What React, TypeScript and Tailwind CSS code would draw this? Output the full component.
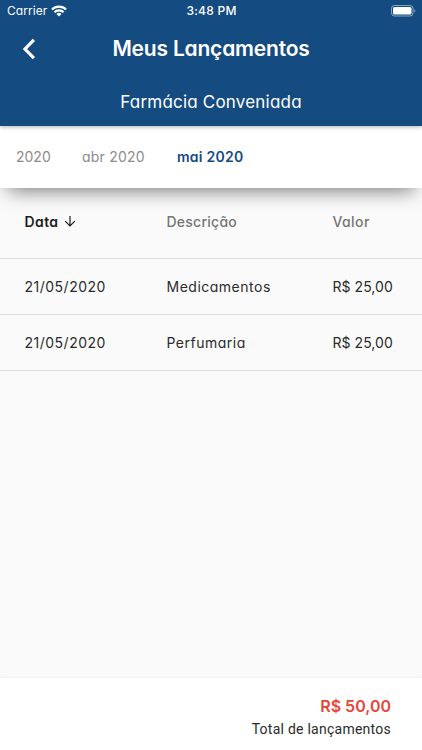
import React, { useState } from 'react';

type Entry = {
  id: number;
  date: string;
  description: string;
  value: string;
};

const months = [
  { id: 'prev', label: '2020', className: 'w-[34px] mr-8' },
  { id: 'abr', label: 'abr 2020', className: 'w-16 mr-[31px] tracking-[0.2px]' },
  { id: 'mai', label: 'mai 2020', className: 'tracking-[0.25px]' },
];

const entries: Entry[] = [
  { id: 1, date: '21/05/2020', description: 'Medicamentos', value: 'R$ 25,00' },
  { id: 2, date: '21/05/2020', description: 'Perfumaria', value: 'R$ 25,00' },
];

const StatusBar = () => (
  <div className="grid h-[22px] grid-cols-3 items-center pl-[7px] pr-[6px] text-[12px] leading-[22px]">
    <div className="flex items-center gap-[4px]">
      <span className="tracking-[0.05px]">Carrier</span>
      <svg className="h-[12px] w-[16px]" viewBox="0 0 16 12" fill="none" stroke="currentColor" strokeWidth="2.1">
        <path d="M.9 4.500a10.200 10.200 0 0 1 14.200 0" />
        <path d="M3.400 7.200a6.600 6.600 0 0 1 9.200 0" />
        <path d="M8 11.500 5.500 9a3.600 3.600 0 0 1 5 0Z" fill="currentColor" stroke="none" />
      </svg>
    </div>
    <span className="text-center font-medium tracking-[0.25px]">3:48 PM</span>
    <svg className="h-[12px] w-[25px] justify-self-end" viewBox="0 0 25 12" fill="none">
      <rect x="0.5" y="0.5" width="21.5" height="10.5" rx="3" stroke="#fff" strokeOpacity="0.5" />
      <rect x="2" y="2" width="18.5" height="7.5" rx="1.6" fill="#fff" />
      <path d="M23.3 4v3.5c1.4-.6 1.4-2.900 0-3.500Z" fill="#fff" fillOpacity="0.5" />
    </svg>
  </div>
);

const Header = () => (
  <header className="relative z-20 h-[126px] bg-[#144b80] text-white shadow-[0_1px_4px_rgba(0,0,0,0.3)]">
    <StatusBar />
    <div className="grid h-[54px] grid-cols-[60px_1fr_60px] items-center">
      <button className="pl-[22px]" aria-label="Voltar">
        <svg className="h-[22px] w-[14px]" viewBox="0 0 14 22" fill="none" stroke="currentColor" strokeWidth="3.2">
          <path d="M11.900 1.900 3 11l8.900 9.100" />
        </svg>
      </button>
      <h1 className="whitespace-nowrap text-center text-[21px] font-semibold leading-7 tracking-[-0.2px]">Meus Lançamentos</h1>
    </div>
    <h2 className="pt-[14px] text-center text-[17px] leading-6 tracking-[0.2px]">Farmácia Conveniada</h2>
  </header>
);

const App = () => {
  const [selected, setSelected] = useState('mai');

  return (
    <div className="flex h-[750px] w-[422px] flex-col overflow-hidden bg-[#fafafa] font-['Inter','Liberation_Sans',sans-serif] text-[#2b2b2b] [font-feature-settings:'cv11']">
      <Header />
      <nav className="relative z-10 flex h-[62px] items-center bg-white pb-[2px] pl-4 text-[14px] shadow-[0_10px_20px_-8px_rgba(0,0,0,0.55)]">
        {months.map((month) => (
          <button
            key={month.id}
            onClick={() => setSelected(month.id)}
            className={`whitespace-nowrap text-left ${month.className} ${selected === month.id ? 'font-semibold text-[#144b80]' : 'text-[#8c8c8c]'}`}
          >
            {month.label}
          </button>
        ))}
      </nav>

      <main className="flex-1 text-[14px]">
        <div className="grid h-[71px] grid-cols-[142px_166px_1fr] items-center border-b border-[#dedede] pb-[4px] pl-[24.5px] font-medium text-[#757575]">
          <div className="flex items-center gap-[5px] font-semibold text-[#1c1c1c]">
            <span className="tracking-[0.4px]">Data</span>
            <svg className="h-3 w-3" viewBox="0 0 12 12" fill="none" stroke="currentColor" strokeWidth="1.2">
              <path d="M6 1v10M1.200 6.200 6 11l4.800-4.800" />
            </svg>
          </div>
          <span className="tracking-[0.25px]">Descrição</span>
          <span className="tracking-[0.4px]">Valor</span>
        </div>
        {entries.map((entry) => (
          <div
            key={entry.id}
            className="grid h-14 grid-cols-[142px_166px_1fr] items-center border-b border-[#dedede] pl-[24.5px]"
          >
            <span className="tracking-[0.5px]">{entry.date}</span>
            <span className="tracking-[0.5px]">{entry.description}</span>
            <span className="tracking-[0.05px]">{entry.value}</span>
          </div>
        ))}
      </main>

      <footer className="flex h-[72px] flex-col items-end bg-white pr-[31px] pt-4 shadow-[0_-1px_2px_rgba(0,0,0,0.04)]">
        <strong className="text-[16px] font-semibold leading-6 text-[#e74539]">R$ 50,00</strong>
        <span className="pt-px font-['Roboto','Liberation_Sans',sans-serif] text-[14px] leading-5 tracking-[0.25px]">Total de lançamentos</span>
      </footer>
    </div>
  );
};

export default App;
